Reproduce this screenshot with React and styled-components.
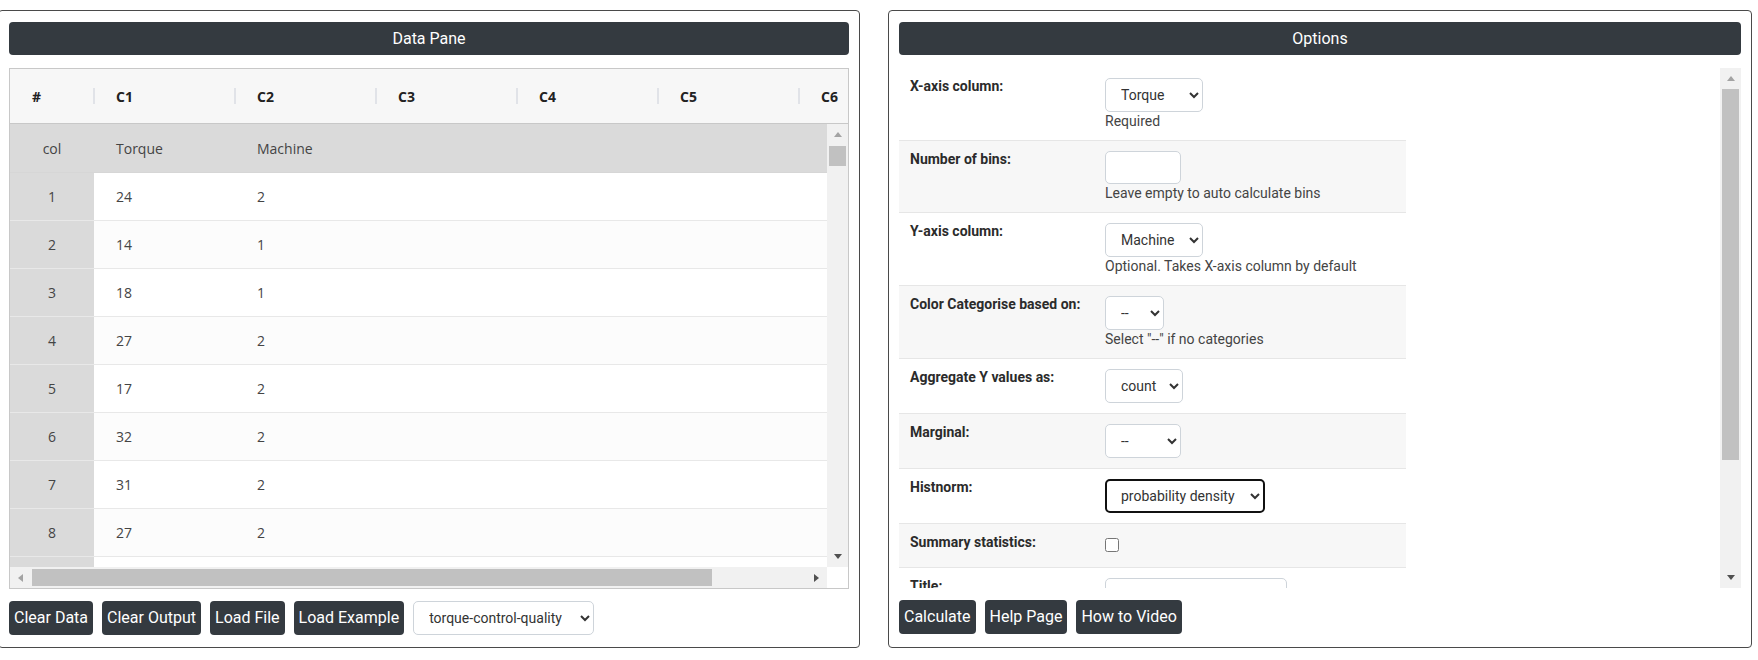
import React from 'react';
import styled, { createGlobalStyle } from 'styled-components';

const GlobalStyle = createGlobalStyle`
  * { box-sizing: border-box; }
  body {
    margin: 0;
    background: #fff;
    overflow: hidden;
    font-family: Roboto, "Liberation Sans", sans-serif;
  }
`;

const Page = styled.div`
  display: flex;
  gap: 28px;
  padding-top: 10px;
  margin-left: -2px;
`;

const Panel = styled.section`
  width: ${p => p.$w}px;
  height: 638px;
  flex: none;
  border: 1px solid #4a4a4a;
  border-radius: 4px;
  padding: 11px 10px 0;
  display: flex;
  flex-direction: column;
`;

const PaneTitle = styled.div`
  height: 33px;
  flex: none;
  background: #343a40;
  color: #fff;
  border-radius: 4px;
  display: flex;
  align-items: center;
  justify-content: center;
  font-size: 16px;
`;

/* scrollbars, Windows style */
const ScrollBar = styled.div`
  flex: ${p => (p.$horizontal ? '1' : 'none')};
  display: flex;
  flex-direction: ${p => (p.$horizontal ? 'row' : 'column')};
  ${p => (p.$horizontal ? 'height: 21px;' : 'width: 21px;')}
  background: #f1f1f1;
`;

const ScrollArrow = styled.div`
  flex: none;
  width: 21px;
  height: 21px;
  display: flex;
  align-items: center;
  justify-content: center;
`;

const ScrollTrack = styled.div`
  flex: 1;
  display: flex;
  flex-direction: ${p => (p.$horizontal ? 'row' : 'column')};
  min-width: 0;
  min-height: 0;
`;

const ScrollThumb = styled.div`
  flex: none;
  background: #c1c1c1;
  ${p =>
    p.$horizontal
      ? `width: ${p.$size}px; height: 17px; margin: 2px 0 0 ${p.$offset}px;`
      : `height: ${p.$size}px; width: 17px; margin: ${p.$offset}px 0 0 2px;`}
`;

const arrowPoints = {
  up: '0,5 4,0 8,5',
  down: '0,0 4,5 8,0',
  left: '5,0 0,4 5,8',
  right: '0,0 5,4 0,8',
};

const Arrow = ({ dir, dim }) => {
  const flat = dir === 'up' || dir === 'down';
  return (
    <ScrollArrow>
      <svg width={flat ? 8 : 5} height={flat ? 5 : 8} viewBox={flat ? '0 0 8 5' : '0 0 5 8'}>
        <polygon points={arrowPoints[dir]} fill={dim ? '#a3a3a3' : '#505050'} />
      </svg>
    </ScrollArrow>
  );
};

const VScroll = ({ offset, size }) => (
  <ScrollBar>
    <Arrow dir="up" dim />
    <ScrollTrack>
      <ScrollThumb $offset={offset} $size={size} />
    </ScrollTrack>
    <Arrow dir="down" />
  </ScrollBar>
);

const HScroll = ({ offset, size }) => (
  <ScrollBar $horizontal>
    <Arrow dir="left" dim />
    <ScrollTrack $horizontal>
      <ScrollThumb $horizontal $offset={offset} $size={size} />
    </ScrollTrack>
    <Arrow dir="right" />
  </ScrollBar>
);

/* data grid */
const Grid = styled.div`
  margin-top: 13px;
  height: 521px;
  flex: none;
  border: 1px solid #c8c8c8;
  display: flex;
  flex-direction: column;
  overflow: hidden;
  font-family: "Open Sans", "Liberation Sans", sans-serif;
  font-size: 14px;
`;

const GridHead = styled.div`
  height: 55px;
  flex: none;
  display: flex;
  overflow: hidden;
  background: #f7f7f7;
  border-bottom: 1px solid #c8c8c8;
`;

const HeadCell = styled.div`
  width: ${p => p.$w}px;
  flex: none;
  position: relative;
  display: flex;
  align-items: center;
  padding-left: 22px;
  font-weight: 700;
  color: #222;

  &::after {
    content: '';
    position: absolute;
    right: -1px;
    top: 19px;
    width: 2px;
    height: 16px;
    background: #e1e3e8;
  }
`;

const GridBody = styled.div`
  height: 443px;
  flex: none;
  display: flex;
`;

const RowsViewport = styled.div`
  flex: 1;
  min-width: 0;
  overflow: hidden;
`;

const Row = styled.div`
  display: flex;
  width: 930px;
  height: ${p => (p.$names ? 49 : 48)}px;
  border-bottom: 1px solid ${p => (p.$names ? '#d6d6d6' : '#e8e8e8')};
  background: ${p => (p.$names ? '#dadada' : p.$odd ? '#fcfcfc' : '#fff')};
  color: #444;
`;

const RowHead = styled.div`
  width: 84px;
  flex: none;
  background: #dadada;
  display: flex;
  align-items: center;
  justify-content: center;
`;

const Cell = styled.div`
  width: 141px;
  flex: none;
  display: flex;
  align-items: center;
  padding-left: 22px;
`;

const GridFoot = styled.div`
  height: 21px;
  flex: none;
  display: flex;
`;

const Corner = styled.div`
  width: 21px;
  flex: none;
  background: #fff;
`;

/* buttons and fields */
const Toolbar = styled.div`
  margin-top: 12px;
  display: flex;
  align-items: center;
  gap: 9px;
`;

const DarkButton = styled.button`
  height: 34px;
  padding: 0 5px;
  border: none;
  border-radius: 4px;
  background: #343a40;
  color: #fff;
  font-family: Roboto, "Liberation Sans", sans-serif;
  font-size: 16px;
  line-height: 24px;
  cursor: pointer;
`;

const Select = styled.select`
  width: ${p => p.$w}px;
  height: 34px;
  padding: 0 6px 0 ${p => (p.$focused ? 10 : 11)}px;
  border: ${p => (p.$focused ? '2px solid #111' : '1px solid #ced4da')};
  border-radius: 5px;
  background: #fff;
  color: #333;
  font-family: Roboto, "Liberation Sans", sans-serif;
  font-size: 14px;
`;

const TextInput = styled.input`
  width: ${p => p.$w}px;
  height: ${p => p.$h || 34}px;
  padding: 0 11px;
  border: 1px solid #ced4da;
  border-radius: 5px;
  background: #fff;
  color: #555;
  font-family: Roboto, "Liberation Sans", sans-serif;
  font-size: 14px;
`;

const FormScroll = styled.div`
  margin-top: 13px;
  height: 520px;
  flex: none;
  display: flex;
`;

const FormViewport = styled.div`
  flex: 1;
  min-width: 0;
  overflow: hidden;
`;

const FieldRow = styled.div`
  width: 507px;
  display: grid;
  grid-template-columns: 206px 1fr;
  background: ${p => (p.$shade ? '#f7f7f7' : '#fff')};
  border-top: ${p => (p.$first ? 'none' : '1px solid #e6e6e6')};
`;

const FieldLabel = styled.div`
  padding: 10px 10px 10px 11px;
  font-size: 14px;
  line-height: 17px;
  font-weight: 700;
  color: #2b2b2b;
`;

const FieldControl = styled.div`
  padding: 10px 0;
  display: flex;
  flex-direction: column;
  align-items: flex-start;
`;

const Hint = styled.div`
  font-size: 14px;
  line-height: 18px;
  color: #444;
`;

const Check = styled.input`
  width: 14px;
  height: 14px;
  margin: 4px 0 5px;
`;

const columns = ['C1', 'C2', 'C3', 'C4', 'C5', 'C6'];

const dataRows = [
  [24, 2], [14, 1], [18, 1], [27, 2], [17, 2], [32, 2], [31, 2], [27, 2],
];

const DataPane = () => (
  <Panel $w={862}>
    <PaneTitle>Data Pane</PaneTitle>
    <Grid>
      <GridHead>
        <HeadCell $w={84}>#</HeadCell>
        {columns.map(c => (
          <HeadCell key={c} $w={141}>{c}</HeadCell>
        ))}
      </GridHead>
      <GridBody>
        <RowsViewport>
          <Row $names>
            <RowHead>col</RowHead>
            <Cell>Torque</Cell>
            <Cell>Machine</Cell>
          </Row>
          {dataRows.map((r, i) => (
            <Row key={i} $odd={i % 2 === 1}>
              <RowHead>{i + 1}</RowHead>
              <Cell>{r[0]}</Cell>
              <Cell>{r[1]}</Cell>
            </Row>
          ))}
          {/* top edge of the next row, scrolled out of view */}
          <Row>
            <RowHead />
          </Row>
        </RowsViewport>
        <VScroll offset={1} size={20} />
      </GridBody>
      <GridFoot>
        <HScroll offset={1} size={680} />
        <Corner />
      </GridFoot>
    </Grid>
    <Toolbar>
      <DarkButton>Clear Data</DarkButton>
      <DarkButton>Clear Output</DarkButton>
      <DarkButton>Load File</DarkButton>
      <DarkButton>Load Example</DarkButton>
      <Select $w={181} defaultValue="torque-control-quality">
        <option>torque-control-quality</option>
        <option>machine-output</option>
      </Select>
    </Toolbar>
  </Panel>
);

const Field = ({ label, hint, shade, first, children }) => (
  <FieldRow $shade={shade} $first={first}>
    <FieldLabel>{label}</FieldLabel>
    <FieldControl>
      {children}
      {hint && <Hint>{hint}</Hint>}
    </FieldControl>
  </FieldRow>
);

const OptionsPane = () => (
  <Panel $w={864}>
    <PaneTitle>Options</PaneTitle>
    <FormScroll>
      <FormViewport>
        <Field first label="X-axis column:" hint="Required">
          <Select $w={98} defaultValue="Torque">
            <option>Torque</option>
            <option>Machine</option>
          </Select>
        </Field>
        <Field shade label="Number of bins:" hint="Leave empty to auto calculate bins">
          <TextInput $w={76} $h={33} type="text" />
        </Field>
        <Field label="Y-axis column:" hint="Optional. Takes X-axis column by default">
          <Select $w={98} defaultValue="Machine">
            <option>Torque</option>
            <option>Machine</option>
          </Select>
        </Field>
        <Field shade label="Color Categorise based on:" hint={'Select "--" if no categories'}>
          <Select $w={59} defaultValue="--">
            <option>--</option>
            <option>Machine</option>
          </Select>
        </Field>
        <Field label="Aggregate Y values as:">
          <Select $w={78} defaultValue="count">
            <option>count</option>
            <option>sum</option>
            <option>avg</option>
          </Select>
        </Field>
        <Field shade label="Marginal:">
          <Select $w={76} defaultValue="--">
            <option>--</option>
            <option>box</option>
            <option>rug</option>
          </Select>
        </Field>
        <Field label="Histnorm:">
          <Select $w={160} $focused defaultValue="probability density">
            <option>probability density</option>
            <option>percent</option>
          </Select>
        </Field>
        <Field shade label="Summary statistics:">
          <Check type="checkbox" />
        </Field>
        <Field label="Title:">
          <TextInput $w={182} type="text" defaultValue="Histogram" />
        </Field>
      </FormViewport>
      <VScroll offset={0} size={371} />
    </FormScroll>
    <Toolbar>
      <DarkButton>Calculate</DarkButton>
      <DarkButton>Help Page</DarkButton>
      <DarkButton>How to Video</DarkButton>
    </Toolbar>
  </Panel>
);

export default function App() {
  return (
    <>
      <GlobalStyle />
      <Page>
        <DataPane />
        <OptionsPane />
      </Page>
    </>
  );
}
